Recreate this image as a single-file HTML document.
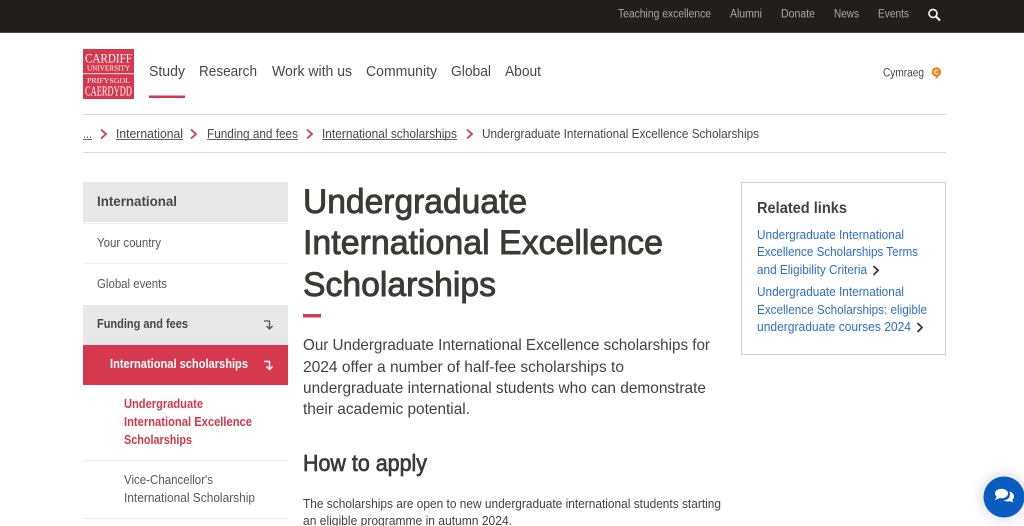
<!DOCTYPE html>
<html lang="en"><head><meta charset="utf-8"><title>Undergraduate International Excellence Scholarships</title>
<style>
html,body{margin:0;padding:0;background:#fff;width:1024px;height:526px;overflow:hidden}
svg{display:block;position:absolute;left:0;top:0}
text{font-family:"Liberation Sans",sans-serif;white-space:pre}
.top{font-size:11.5px;fill:#a8a8a8}
.nav{font-size:15px;fill:#4a4846}
.bc{font-size:13px;fill:#4a4846}
.side{font-size:13px;fill:#5a5755}
.sb{font-size:13px;font-weight:bold;fill:#4a4846}
.red{font-size:13px;font-weight:bold;fill:#d4374c}
.h1{font-size:34px;fill:#3c3937;stroke:#3c3937;stroke-width:.9px}
.p{font-size:16px;fill:#444240}
.b{font-size:13px;fill:#444240}
.l{font-size:13px;fill:#2b6ed2}
.lg{fill:#fff;font-family:"Liberation Serif",serif}
</style></head><body>
<svg width="1024" height="526" viewBox="0 0 1024 526" xmlns="http://www.w3.org/2000/svg">
<defs><filter id="sh" x="-50%" y="-50%" width="200%" height="200%"><feGaussianBlur stdDeviation="7"/></filter></defs>
<rect width="1024" height="33" fill="#211f1e"/>
<rect y="32" width="1024" height="1" fill="#4a4a4a"/>
<text class="top" x="618" y="17.500" textLength="93" lengthAdjust="spacingAndGlyphs">Teaching excellence</text>
<text class="top" x="730" y="17.500" textLength="32" lengthAdjust="spacingAndGlyphs">Alumni</text>
<text class="top" x="781" y="17.500" textLength="34" lengthAdjust="spacingAndGlyphs">Donate</text>
<text class="top" x="834" y="17.500" textLength="25" lengthAdjust="spacingAndGlyphs">News</text>
<text class="top" x="878" y="17.500" textLength="31" lengthAdjust="spacingAndGlyphs">Events</text>
<circle cx="933" cy="13.500" r="4" fill="none" stroke="#f2f2f2" stroke-width="1.700"/>
<path d="M936 16.500l4 4" stroke="#f2f2f2" stroke-width="2.200" fill="none"/>

<rect x="83" y="49" width="51" height="50" fill="#d6394d"/>
<rect x="83" y="73" width="51" height="1.200" fill="#f3c9cf"/>
<text class="lg" x="85" y="62.500" font-size="13" textLength="47" lengthAdjust="spacingAndGlyphs">CARDIFF</text>
<text class="lg" x="87" y="70.500" font-size="7.500" textLength="43" lengthAdjust="spacingAndGlyphs">UNIVERSITY</text>
<text class="lg" x="87" y="83" font-size="7.500" textLength="43" lengthAdjust="spacingAndGlyphs">PRIFYSGOL</text>
<text class="lg" x="85" y="95.500" font-size="13.500" textLength="47" lengthAdjust="spacingAndGlyphs">CAERDYDD</text>

<text class="nav" x="149" y="76" textLength="36" lengthAdjust="spacingAndGlyphs">Study</text>
<text class="nav" x="199" y="76" textLength="58" lengthAdjust="spacingAndGlyphs">Research</text>
<text class="nav" x="272" y="76" textLength="80" lengthAdjust="spacingAndGlyphs">Work with us</text>
<text class="nav" x="366" y="76" textLength="71" lengthAdjust="spacingAndGlyphs">Community</text>
<text class="nav" x="451" y="76" textLength="40" lengthAdjust="spacingAndGlyphs">Global</text>
<text class="nav" x="505" y="76" textLength="36" lengthAdjust="spacingAndGlyphs">About</text>
<rect x="149" y="95.500" width="36" height="2.500" fill="#d6394d"/>
<text x="883" y="76.500" font-size="11.500" fill="#4a4846" textLength="41" lengthAdjust="spacingAndGlyphs">Cymraeg</text>
<circle cx="936.500" cy="72" r="4.700" fill="#f58220"/>
<path d="M939 75.500c-.6 1.500-2 3-4 3.800 1-1 1.200-2.300 1-3.600z" fill="#f58220"/>
<path d="M938 70.800a1.900 1.900 0 1 0 0 2.400" fill="none" stroke="#fff" stroke-width="1"/>

<rect x="83" y="114" width="863" height="1" fill="#d9d9d9"/>
<rect x="83" y="152" width="863" height="1" fill="#d9d9d9"/>
<text class="bc" x="83" y="138" textLength="9" lengthAdjust="spacingAndGlyphs">...</text>
<rect x="83" y="139" width="9" height="1" fill="#666"/>
<path d="M101 129.500l5 4.500-5 4.500" fill="none" stroke="#d6394d" stroke-width="1.800"/>
<text class="bc" x="116" y="138" textLength="67" lengthAdjust="spacingAndGlyphs">International</text>
<rect x="116" y="139" width="67" height="1" fill="#666"/>
<path d="M191 129.500l5 4.500-5 4.500" fill="none" stroke="#d6394d" stroke-width="1.800"/>
<text class="bc" x="207" y="138" textLength="91" lengthAdjust="spacingAndGlyphs">Funding and fees</text>
<rect x="207" y="139" width="91" height="1" fill="#666"/>
<path d="M307 129.500l5 4.500-5 4.500" fill="none" stroke="#d6394d" stroke-width="1.800"/>
<text class="bc" x="322" y="138" textLength="135" lengthAdjust="spacingAndGlyphs">International scholarships</text>
<rect x="322" y="139" width="135" height="1" fill="#666"/>
<path d="M467 129.500l5 4.500-5 4.500" fill="none" stroke="#d6394d" stroke-width="1.800"/>
<text class="bc" x="482" y="138" textLength="277" lengthAdjust="spacingAndGlyphs">Undergraduate International Excellence Scholarships</text>

<rect x="83" y="182" width="205" height="40" fill="#e8e8e8"/>
<rect x="83" y="223" width="205" height="1" fill="#efefef"/>
<text x="97" y="206" font-size="14" font-weight="bold" fill="#4a4846" textLength="80" lengthAdjust="spacingAndGlyphs">International</text>
<text class="side" x="97" y="247" textLength="64" lengthAdjust="spacingAndGlyphs">Your country</text>
<rect x="83" y="263" width="205" height="1" fill="#efefef"/>
<text class="side" x="97" y="288" textLength="70" lengthAdjust="spacingAndGlyphs">Global events</text>
<rect x="83" y="305" width="205" height="40" fill="#e8e8e8"/>
<text class="sb" x="97" y="328" textLength="91" lengthAdjust="spacingAndGlyphs">Funding and fees</text>
<path d="M264 321h5.500v7M266.500 326l3 3 3-3" fill="none" stroke="#555" stroke-width="1.300"/>
<rect x="83" y="345" width="205" height="40" fill="#d6394d"/>
<text x="110" y="368" font-size="13" font-weight="bold" fill="#fff" textLength="138" lengthAdjust="spacingAndGlyphs">International scholarships</text>
<path d="M264 361.500h5.500v7M266.500 366.500l3 3 3-3" fill="none" stroke="#fff" stroke-width="1.500"/>
<text class="red" x="124" y="408" textLength="79" lengthAdjust="spacingAndGlyphs">Undergraduate</text>
<text class="red" x="124" y="426" textLength="128" lengthAdjust="spacingAndGlyphs">International Excellence</text>
<text class="red" x="124" y="444" textLength="68" lengthAdjust="spacingAndGlyphs">Scholarships</text>
<rect x="83" y="460" width="205" height="1" fill="#ececec"/>
<text class="side" x="124" y="484" textLength="89" lengthAdjust="spacingAndGlyphs">Vice-Chancellor's</text>
<text class="side" x="124" y="502" textLength="131" lengthAdjust="spacingAndGlyphs">International Scholarship</text>
<rect x="83" y="518" width="205" height="1" fill="#ececec"/>

<text class="h1" x="303" y="213" textLength="224" lengthAdjust="spacingAndGlyphs">Undergraduate</text>
<text class="h1" x="303" y="254" textLength="360" lengthAdjust="spacingAndGlyphs">International Excellence</text>
<text class="h1" x="303" y="296" textLength="193" lengthAdjust="spacingAndGlyphs">Scholarships</text>
<rect x="303" y="314" width="18" height="3.500" fill="#d6394d"/>
<text class="p" x="303" y="350" textLength="407" lengthAdjust="spacingAndGlyphs">Our Undergraduate International Excellence scholarships for</text>
<text class="p" x="303" y="372" textLength="321" lengthAdjust="spacingAndGlyphs">2024 offer a number of half-fee scholarships to</text>
<text class="p" x="303" y="393" textLength="403" lengthAdjust="spacingAndGlyphs">undergraduate international students who can demonstrate</text>
<text class="p" x="303" y="414" textLength="167" lengthAdjust="spacingAndGlyphs">their academic potential.</text>
<text x="303" y="471" font-size="23" fill="#3c3937" stroke="#3c3937" stroke-width=".7" textLength="124" lengthAdjust="spacingAndGlyphs">How to apply</text>
<text class="b" x="303" y="508" textLength="418" lengthAdjust="spacingAndGlyphs">The scholarships are open to new undergraduate international students starting</text>
<text class="b" x="303" y="525" textLength="209" lengthAdjust="spacingAndGlyphs">an eligible programme in autumn 2024.</text>

<rect x="741.500" y="182.500" width="204" height="172" fill="#fff" stroke="#d0d0d0"/>
<text x="757" y="213" font-size="15.500" font-weight="bold" fill="#444240" textLength="90" lengthAdjust="spacingAndGlyphs">Related links</text>
<text class="l" x="757" y="239" textLength="147" lengthAdjust="spacingAndGlyphs">Undergraduate International</text>
<text class="l" x="757" y="256" textLength="161" lengthAdjust="spacingAndGlyphs">Excellence Scholarships Terms</text>
<text class="l" x="757" y="274" textLength="110" lengthAdjust="spacingAndGlyphs">and Eligibility Criteria</text>
<path d="M873.500 266l4.500 4.500-4.500 4.500" fill="none" stroke="#3c3937" stroke-width="1.800"/>
<text class="l" x="757" y="296" textLength="147" lengthAdjust="spacingAndGlyphs">Undergraduate International</text>
<text class="l" x="757" y="314" textLength="170" lengthAdjust="spacingAndGlyphs">Excellence Scholarships: eligible</text>
<text class="l" x="757" y="331" textLength="154" lengthAdjust="spacingAndGlyphs">undergraduate courses 2024</text>
<path d="M917.500 323l4.500 4.500-4.500 4.500" fill="none" stroke="#3c3937" stroke-width="1.800"/>

<circle cx="1004" cy="497" r="22" fill="#000" opacity=".16" filter="url(#sh)"/>
<circle cx="1004" cy="497" r="20.500" fill="#0b5cc0"/>
<ellipse cx="1001.500" cy="493.500" rx="6.500" ry="4.800" fill="#fff"/>
<path d="M997 496l-2 4 5-2z" fill="#fff"/>
<path d="M1009.500 491.500c2.800.8 4.500 2.800 4.500 5 0 1.400-.7 2.600-1.800 3.500l1.300 2.500-3.800-1.300c-2 .5-4.500.2-6-1 4 .1 7.500-2.700 5.800-8.700z" fill="#fff"/>
</svg>
</body></html>
